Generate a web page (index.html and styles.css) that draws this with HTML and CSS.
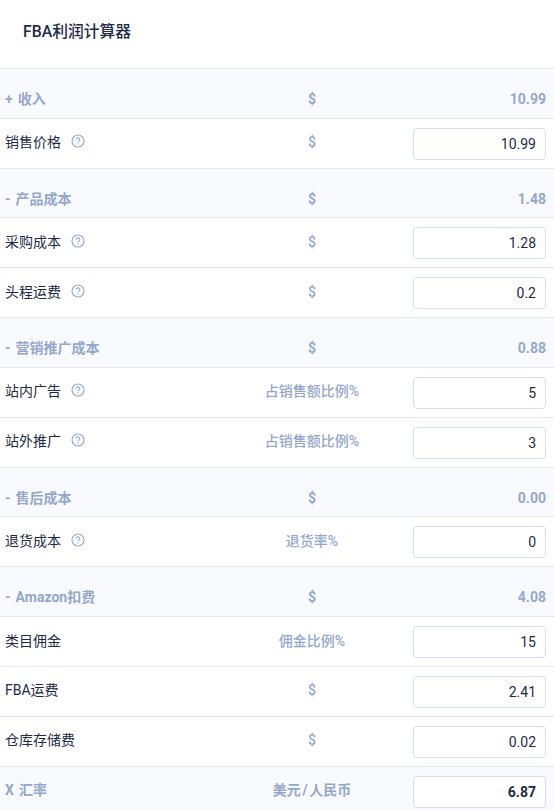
FILE: index.html
```html
<!DOCTYPE html>
<html lang="zh-CN">
<head>
    <meta charset="UTF-8">
    <meta name="viewport" content="width=device-width, initial-scale=1.0">
    <title>FBA利润计算器</title>
    <link rel="stylesheet" href="styles.css">
</head>
<body>
    <svg class="sprite" width="0" height="0">
        <symbol id="help" viewBox="0 0 14 14">
            <circle cx="7" cy="7" r="6" />
            <path d="M5.2 5.6a1.8 1.8 0 1 1 2.6 1.6c-.6.3-.8.5-.8 1.1M7 9.3v1.1" />
        </symbol>
    </svg>

    <div class="calculator">
        <h1 class="title">FBA利润计算器</h1>

        <div class="row section">
            <div class="label">+ 收入</div>
            <div class="unit">$</div>
            <div class="total">10.99</div>
        </div>
        <div class="row">
            <div class="label">销售价格<svg class="help"><use href="#help" /></svg></div>
            <div class="unit">$</div>
            <input class="field" type="text" value="10.99">
        </div>

        <div class="row section">
            <div class="label">- 产品成本</div>
            <div class="unit">$</div>
            <div class="total">1.48</div>
        </div>
        <div class="row">
            <div class="label">采购成本<svg class="help"><use href="#help" /></svg></div>
            <div class="unit">$</div>
            <input class="field" type="text" value="1.28">
        </div>
        <div class="row">
            <div class="label">头程运费<svg class="help"><use href="#help" /></svg></div>
            <div class="unit">$</div>
            <input class="field" type="text" value="0.2">
        </div>

        <div class="row section">
            <div class="label">- 营销推广成本</div>
            <div class="unit">$</div>
            <div class="total">0.88</div>
        </div>
        <div class="row">
            <div class="label">站内广告<svg class="help"><use href="#help" /></svg></div>
            <div class="unit">占销售额比例%</div>
            <input class="field" type="text" value="5">
        </div>
        <div class="row">
            <div class="label">站外推广<svg class="help"><use href="#help" /></svg></div>
            <div class="unit">占销售额比例%</div>
            <input class="field" type="text" value="3">
        </div>

        <div class="row section">
            <div class="label">- 售后成本</div>
            <div class="unit">$</div>
            <div class="total">0.00</div>
        </div>
        <div class="row">
            <div class="label">退货成本<svg class="help"><use href="#help" /></svg></div>
            <div class="unit">退货率%</div>
            <input class="field" type="text" value="0">
        </div>

        <div class="row section">
            <div class="label">- Amazon扣费</div>
            <div class="unit">$</div>
            <div class="total">4.08</div>
        </div>
        <div class="row">
            <div class="label">类目佣金</div>
            <div class="unit">佣金比例%</div>
            <input class="field" type="text" value="15">
        </div>
        <div class="row">
            <div class="label">FBA运费</div>
            <div class="unit">$</div>
            <input class="field" type="text" value="2.41">
        </div>
        <div class="row">
            <div class="label">仓库存储费</div>
            <div class="unit">$</div>
            <input class="field" type="text" value="0.02">
        </div>

        <div class="row rate">
            <div class="label">X 汇率</div>
            <div class="unit">美元<span class="slash">/</span>人民币</div>
            <input class="field" type="text" value="6.87">
        </div>
    </div>
</body>
</html>
```
FILE: styles.css
```css
* {
    box-sizing: border-box;
}

body {
    margin: 0;
    height: 811px;
    overflow: hidden;
    background-color: #fff;
    color: #1c2b46;
    font-family: Roboto, "Noto Sans CJK SC", sans-serif;
    font-size: 14px;
}

.sprite {
    display: block;
}

.title {
    margin: 0;
    height: 69px;
    padding: 20px 0 0 23px;
    border-bottom: 1px solid #e3e6ea;
    font-size: 15.8px;
    font-weight: 500;
    line-height: 24px;
}

.row {
    display: grid;
    grid-template-columns: 213px 190px 133px;
    column-gap: 2.5px;
    height: 49.83px;
    padding-left: 5px;
    border-bottom: 1px solid #e6e7e9;
    line-height: 20px;
}

.label,
.unit {
    padding-top: 13.4px;
}

.label {
    display: flex;
}

.unit {
    padding-right: 8px;
    padding-left: 1px;
    color: #93a8cc;
    font-weight: 500;
    text-align: center;
}

.help {
    width: 14px;
    height: 14px;
    margin: 2px 0 0 10px;
    fill: none;
    stroke: #9aafd3;
    stroke-width: 1.2;
}

.section,
.rate {
    background-color: #f9fafe;
    color: #93a8cc;
    font-weight: 700;
}

.section .unit,
.rate .unit {
    font-weight: 700;
}

.section > div {
    padding-top: 20px;
}

.section .label,
.rate .label {
    word-spacing: 1.6px;
}

.slash {
    padding: 0 1.7px;
}

.total {
    text-align: right;
}

.field {
    width: 133px;
    height: 32px;
    margin-top: 9px;
    padding: 0 9px;
    border: 1px solid #d3dff0;
    border-radius: 4px;
    outline: none;
    background-color: #fff;
    color: #1c2b46;
    font: inherit;
    font-weight: 400;
    text-align: right;
}

.rate .field {
    font-weight: 700;
}
```
